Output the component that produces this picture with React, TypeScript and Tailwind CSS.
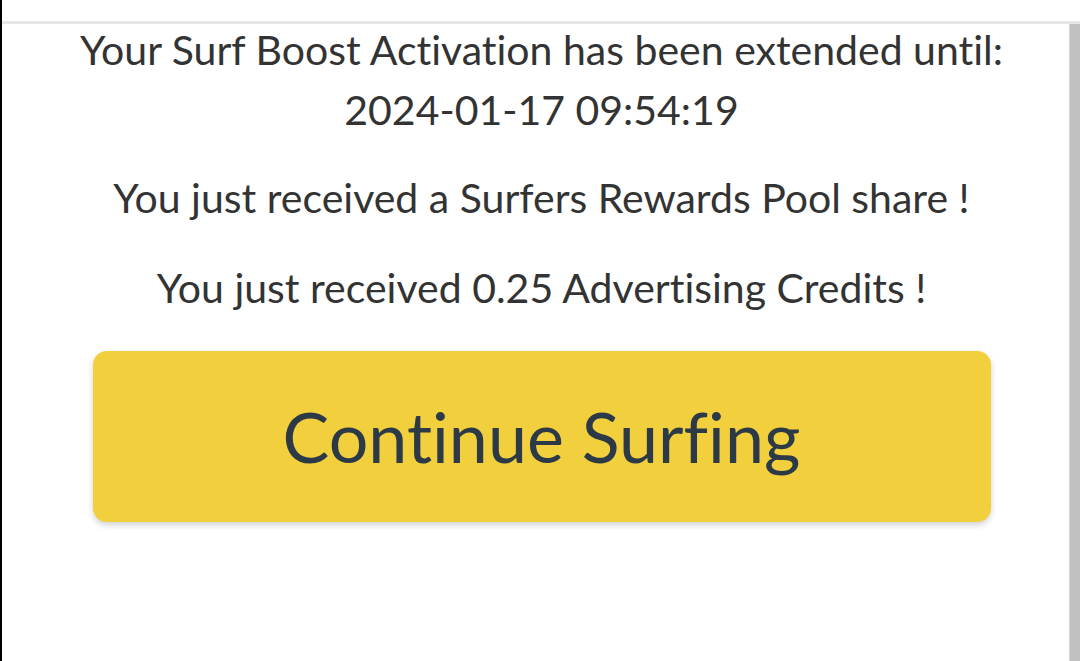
import React from "react";

export default function App() {
  return (
    <div className="w-[1080px] h-[661px] overflow-hidden bg-white flex border-l-2 border-black [font-variant-ligatures:none]" style={{ fontFamily: "Lato, 'Noto Sans', sans-serif" }}>
      <div className="flex-1 flex flex-col">
        <div className="h-[21px] bg-white" />
        <div className="h-[3px] bg-[#e6e6e6]" />
        <div className="flex-1 flex">
          <main className="flex-1 pl-[12px] text-center text-[#333333]">
            <div className="mt-[-4px] text-[41px] leading-[60px]">
              <p>Your Surf Boost Activation has been extended until:</p>
              <p>2024-01-17 09:54:19</p>
            </div>
            <p className="mt-[28px] text-[41px] leading-[60px]">You just received a Surfers Rewards Pool share !</p>
            <p className="mt-[30px] text-[41px] leading-[60px]">You just received 0.25 Advertising Credits !</p>
            <div className="mt-[33px] flex justify-center">
              <button className="w-[898px] h-[171px] rounded-[14px] bg-[#f2cf3c] text-[#2c3a47] text-[70px] shadow-[0_3px_6px_rgba(0,0,0,0.18)]">
                Continue Surfing
              </button>
            </div>
          </main>
          <div className="w-[11px] bg-[#c1c1c1] border-l border-[#d6d6d6]" />
        </div>
      </div>
    </div>
  );
}
